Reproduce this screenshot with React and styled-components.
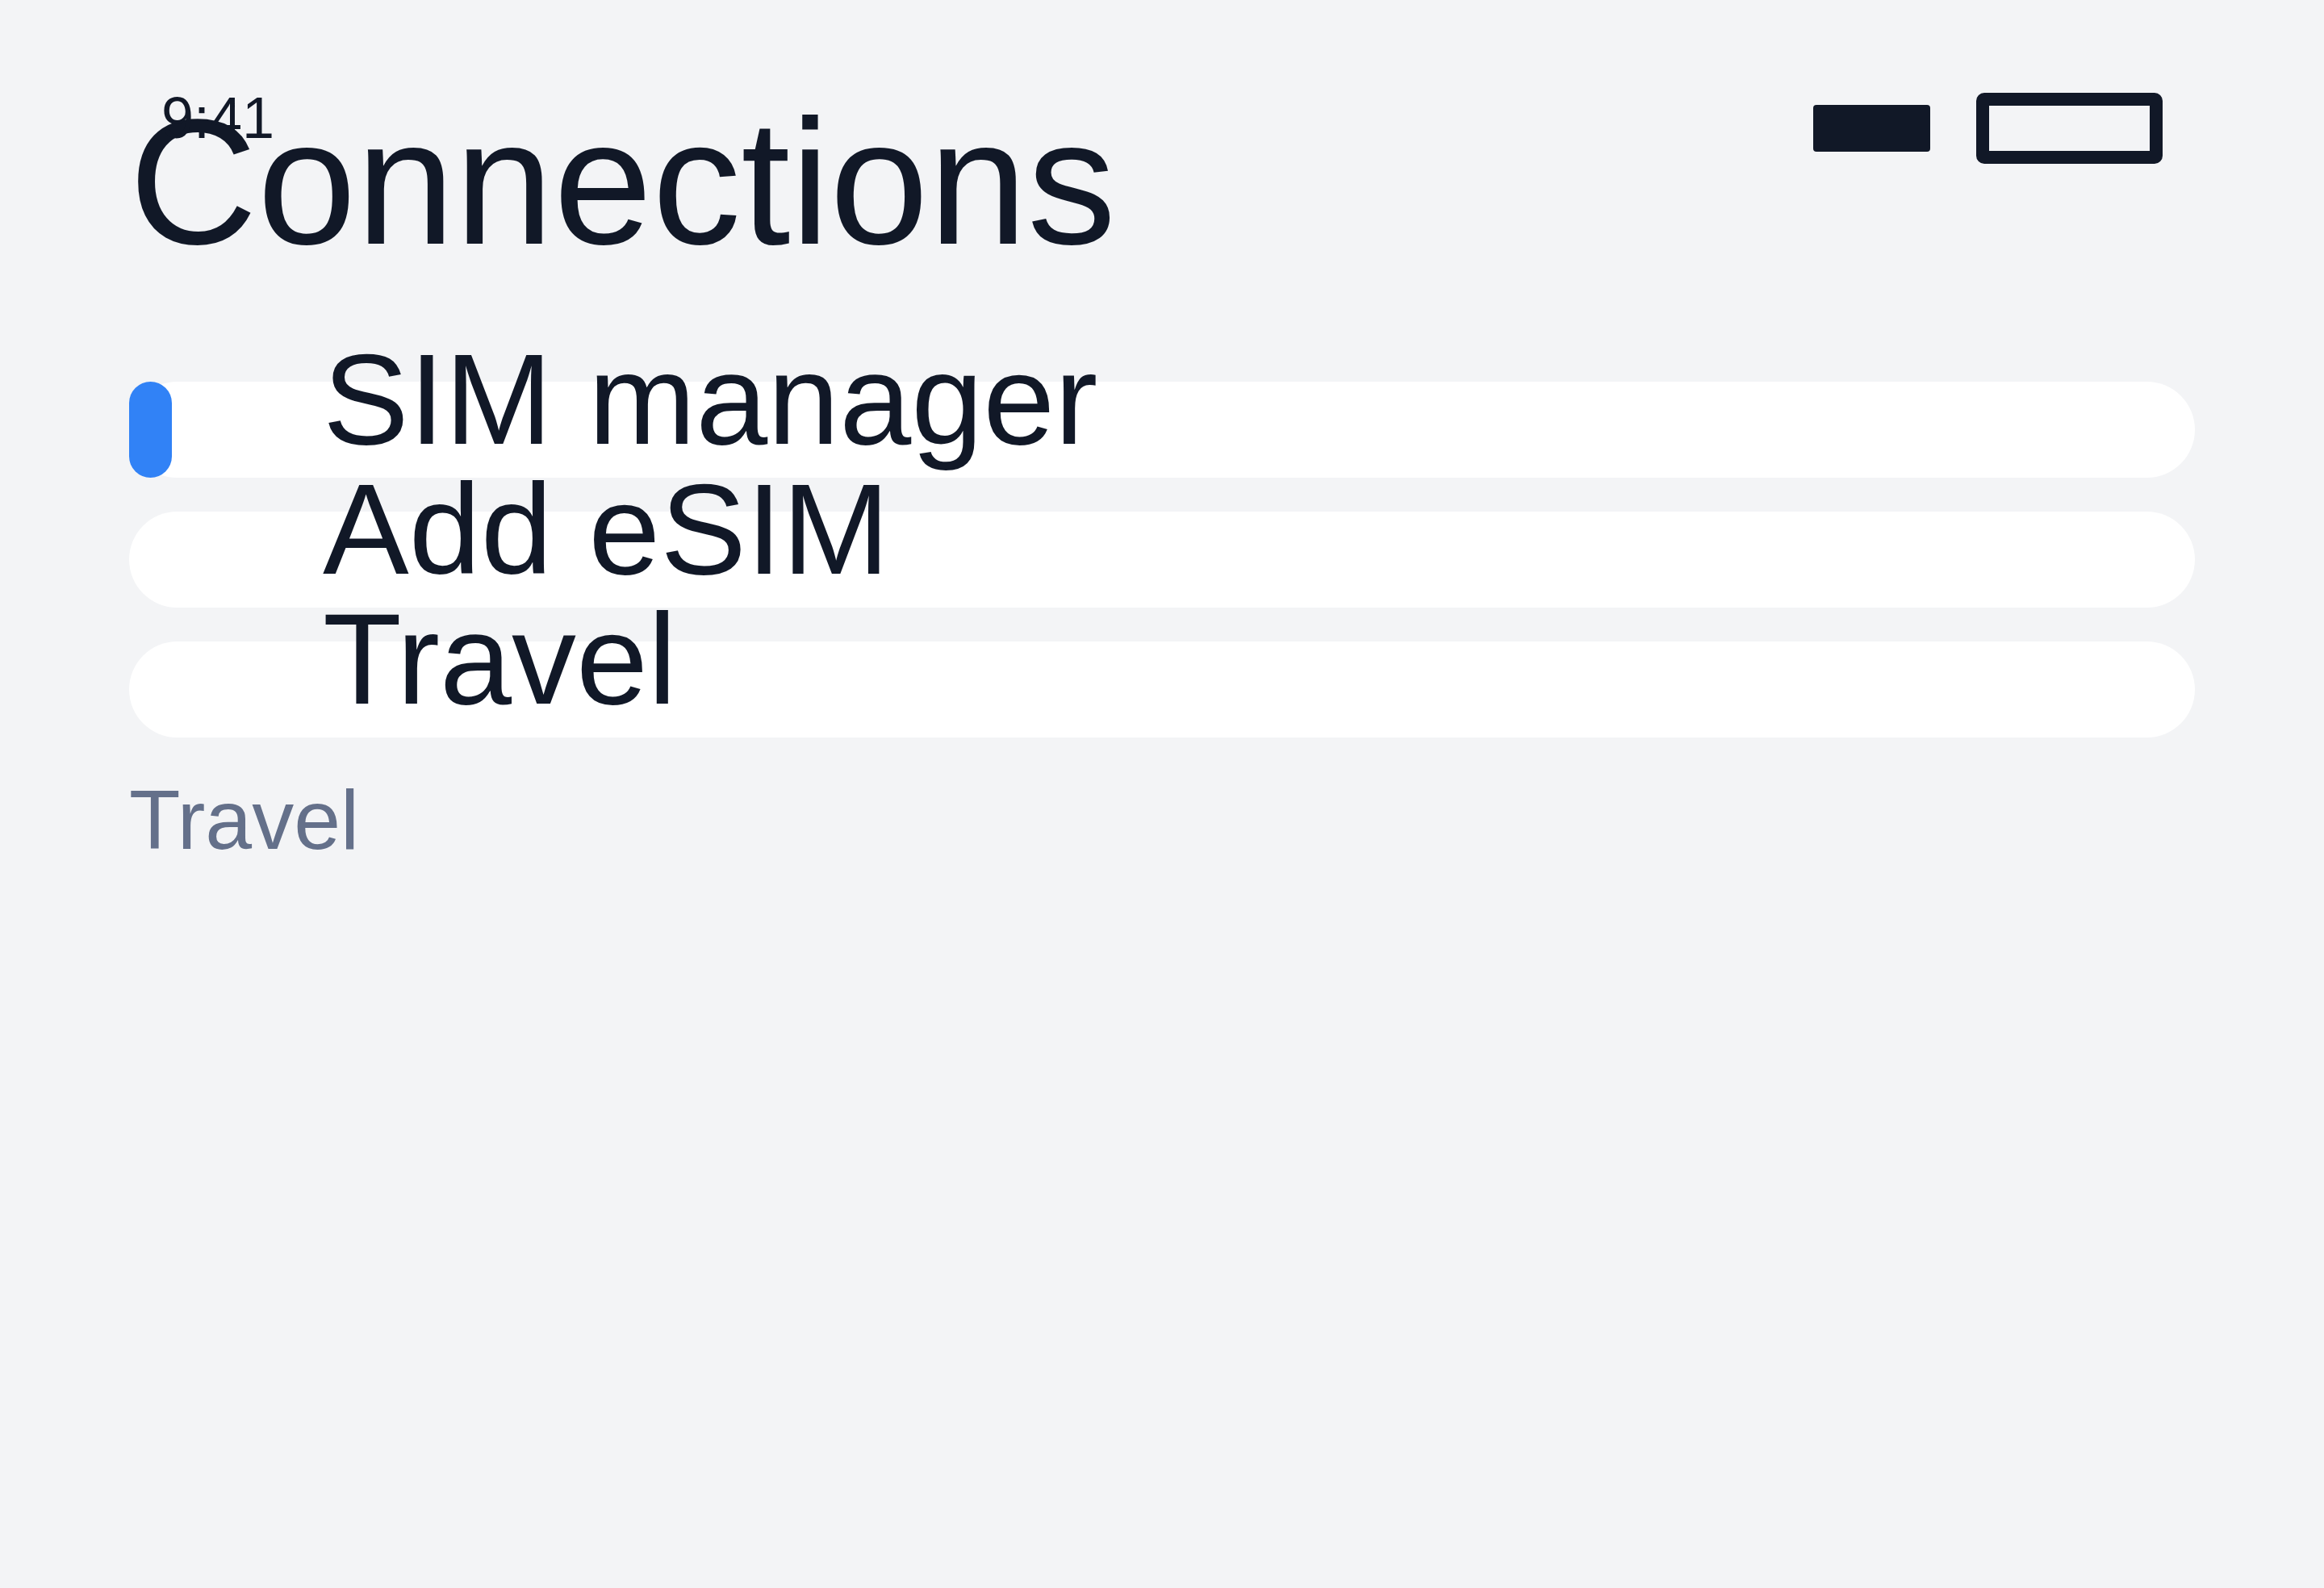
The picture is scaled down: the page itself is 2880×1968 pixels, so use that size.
import { createGlobalStyle, styled } from "styled-components";

const GlobalStyle = createGlobalStyle`
  html, body {
    margin: 0;
    padding: 0;
    background: #f3f4f6;
  }
  body {
    font-family: "Liberation Sans", Arial, sans-serif;
    color: #111827;
  }
`;

const Page = styled.main`
  position: relative;
  min-height: 1968px;
  box-sizing: border-box;
  padding: 116px 160px 0;
  background: #f3f4f6;
`;

const StatusBar = styled.div`
  position: absolute;
  top: 110px;
  left: 200px;
  right: 200px;
  display: flex;
  justify-content: space-between;
  align-items: flex-start;
`;

const Time = styled.span`
  font-size: 72px;
  line-height: 72px;
  color: #111827;
`;

const StatusIcons = styled.div`
  display: flex;
  align-items: center;
  gap: 57px;
  margin-top: 5px;
`;

const Titulo = styled.h1`
  margin: 0;
  font-size: 220px;
  line-height: 220px;
  font-weight: 400;
  color: #111827;
`;

const Lista = styled.div`
  display: flex;
  flex-direction: column;
  gap: 42px;
  margin-top: 137px;
`;

const Linha = styled.div`
  display: flex;
  align-items: flex-start;
  height: 119px;
  background: #ffffff;
  border-radius: 60px;
`;

const Indicador = styled.span`
  flex: none;
  width: 53px;
  height: 100%;
  border-radius: 27px;
  background: ${({ $ativo }) => ($ativo ? "#3182f6" : "transparent")};
`;

const TextoLinha = styled.span`
  margin-left: 187px;
  font-size: 160px;
  line-height: 43px;
  white-space: nowrap;
  color: #111827;
`;

const Rotulo = styled.div`
  margin-top: 50px;
  font-size: 104px;
  line-height: 104px;
  color: #64708a;
`;

const itens = [
  { id: "sim", nome: "SIM manager", ativo: true },
  { id: "esim", nome: "Add eSIM" },
  { id: "travel", nome: "Travel" },
];

const App = () => (
  <>
    <GlobalStyle />
    <Page>
      <StatusBar>
        <Time>9:41</Time>
        <StatusIcons>
          <svg width="145" height="58" viewBox="0 0 145 58">
            <rect x="0" y="0" width="145" height="58" rx="4" fill="#111827" />
          </svg>
          <svg width="231" height="88" viewBox="0 0 231 88">
            <rect x="8" y="8" width="215" height="72" rx="2" fill="none" stroke="#111827" strokeWidth="16" />
          </svg>
        </StatusIcons>
      </StatusBar>

      <Titulo>Connections</Titulo>

      <Lista>
        {itens.map((item) => (
          <Linha key={item.id}>
            <Indicador $ativo={item.ativo} />
            <TextoLinha>{item.nome}</TextoLinha>
          </Linha>
        ))}
      </Lista>

      <Rotulo>Travel</Rotulo>
    </Page>
  </>
);

export default App;
